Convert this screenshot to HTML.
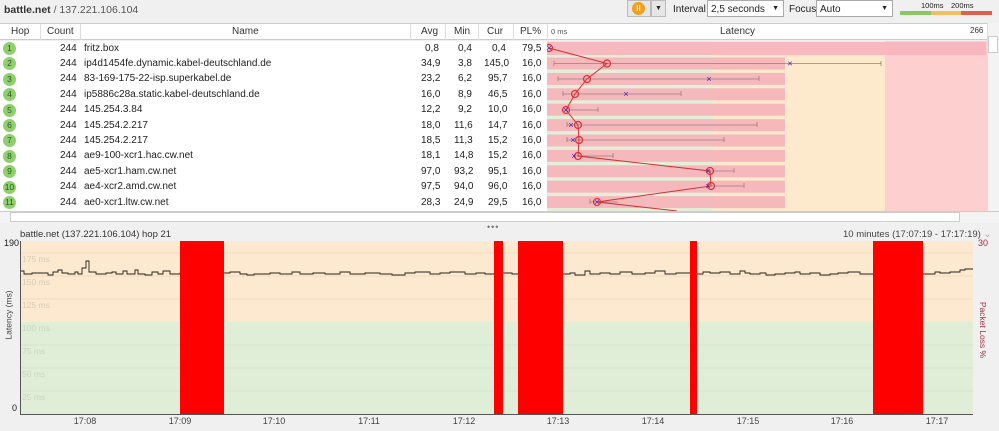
<!DOCTYPE html>
<html><head><meta charset="utf-8"><style>
*{margin:0;padding:0;box-sizing:border-box}
body{width:999px;height:431px;background:#f0f0f0;font-family:"Liberation Sans",sans-serif;font-size:10px;color:#222;position:relative;overflow:hidden}
.a{position:absolute;white-space:nowrap}
.hdr{position:absolute;top:23px;height:17px;left:0;width:987px;background:#fff;border-bottom:1px solid #ccc;border-top:1px solid #ccc}
.hdr div{position:absolute;top:2px;color:#333}
.tbl{position:absolute;top:41px;left:0;width:547px;height:170px;background:#fff}
.r{position:absolute;left:0;width:547px;height:15px}
.r span{position:absolute;top:1.5px}
.hop{position:absolute;left:3px;top:1px;width:13px;height:13px;border-radius:50%;background:#8fcf6e;color:#2a5d1a;font-size:8.5px;text-align:center;line-height:13px}
</style></head><body>
<div class="a" style="left:4px;top:4px;font-size:10.5px;color:#555"><b style="color:#333">battle.net</b> / 137.221.106.104</div>
<div class="a" style="left:627px;top:0;width:24px;height:17px;border:1px solid #bbb;background:#e6e6e6"></div>
<div class="a" style="left:632px;top:2px;width:13px;height:13px;border-radius:50%;background:#f0a020;color:#fff;font-size:8px;line-height:13px;text-align:center;font-weight:bold">ll</div>
<div class="a" style="left:651px;top:0;width:15px;height:17px;border:1px solid #bbb;background:#e6e6e6;font-size:7px;text-align:center;line-height:15px">▼</div>
<div class="a" style="left:673px;top:4px;font-size:10px">Interval</div>
<div class="a" style="left:707px;top:0;width:77px;height:17px;border:1px solid #aaa;background:#fff;font-size:10px;padding:3px 3px">2,5 seconds<span style="position:absolute;right:4px;font-size:7px;top:4px">▼</span></div>
<div class="a" style="left:789px;top:4px;font-size:10px">Focus</div>
<div class="a" style="left:816px;top:0;width:77px;height:17px;border:1px solid #aaa;background:#fff;font-size:10px;padding:3px 3px">Auto<span style="position:absolute;right:4px;font-size:7px;top:4px">▼</span></div>
<div class="a" style="left:921px;top:1px;font-size:7.5px">100ms</div><div class="a" style="left:951px;top:1px;font-size:7.5px">200ms</div>
<div class="a" style="left:900px;top:11px;width:31px;height:4px;background:#8cc665"></div>
<div class="a" style="left:931px;top:11px;width:30px;height:4px;background:#f0c060"></div>
<div class="a" style="left:961px;top:11px;width:31px;height:4px;background:#e06050"></div>
<div class="hdr">
<div style="left:11px">Hop</div><div style="left:47px">Count</div><div style="left:232px">Name</div>
<div style="left:421px">Avg</div><div style="left:454px">Min</div><div style="left:487px">Cur</div><div style="left:520px">PL%</div>
<div style="left:720px">Latency</div><div style="left:970px;font-size:8px">266</div>
</div>
<div class="a" style="left:40px;top:24px;width:1px;height:16px;background:#ddd"></div>
<div class="a" style="left:80px;top:24px;width:1px;height:16px;background:#ddd"></div>
<div class="a" style="left:410px;top:24px;width:1px;height:16px;background:#ddd"></div>
<div class="a" style="left:445px;top:24px;width:1px;height:16px;background:#ddd"></div>
<div class="a" style="left:478px;top:24px;width:1px;height:16px;background:#ddd"></div>
<div class="a" style="left:513px;top:24px;width:1px;height:16px;background:#ddd"></div>
<div class="a" style="left:547px;top:24px;width:1px;height:16px;background:#ddd"></div>
<div class="a" style="left:551px;top:27px;font-size:7.5px;color:#555">0 ms</div>
<div class="tbl">
<div class="r" style="top:0"><div class="hop">1</div><span style="left:60px">244</span><span style="left:84px">fritz.box</span><span style="left:425px">0,8</span><span style="left:458px">0,4</span><span style="left:492px">0,4</span><span style="left:522px">79,5</span></div>
<div class="r" style="top:15.4px"><div class="hop">2</div><span style="left:60px">244</span><span style="left:84px">ip4d1454fe.dynamic.kabel-deutschland.de</span><span style="left:421px">34,9</span><span style="left:458px">3,8</span><span style="left:484px">145,0</span><span style="left:522px">16,0</span></div>
<div class="r" style="top:30.8px"><div class="hop">3</div><span style="left:60px">244</span><span style="left:84px">83-169-175-22-isp.superkabel.de</span><span style="left:421px">23,2</span><span style="left:458px">6,2</span><span style="left:488px">95,7</span><span style="left:522px">16,0</span></div>
<div class="r" style="top:46.2px"><div class="hop">4</div><span style="left:60px">244</span><span style="left:84px">ip5886c28a.static.kabel-deutschland.de</span><span style="left:421px">16,0</span><span style="left:458px">8,9</span><span style="left:488px">46,5</span><span style="left:522px">16,0</span></div>
<div class="r" style="top:61.6px"><div class="hop">5</div><span style="left:60px">244</span><span style="left:84px">145.254.3.84</span><span style="left:421px">12,2</span><span style="left:458px">9,2</span><span style="left:488px">10,0</span><span style="left:522px">16,0</span></div>
<div class="r" style="top:77px"><div class="hop">6</div><span style="left:60px">244</span><span style="left:84px">145.254.2.217</span><span style="left:421px">18,0</span><span style="left:454px">11,6</span><span style="left:488px">14,7</span><span style="left:522px">16,0</span></div>
<div class="r" style="top:92.4px"><div class="hop">7</div><span style="left:60px">244</span><span style="left:84px">145.254.2.217</span><span style="left:421px">18,5</span><span style="left:454px">11,3</span><span style="left:488px">15,2</span><span style="left:522px">16,0</span></div>
<div class="r" style="top:107.8px"><div class="hop">8</div><span style="left:60px">244</span><span style="left:84px">ae9-100-xcr1.hac.cw.net</span><span style="left:421px">18,1</span><span style="left:454px">14,8</span><span style="left:488px">15,2</span><span style="left:522px">16,0</span></div>
<div class="r" style="top:123.2px"><div class="hop">9</div><span style="left:60px">244</span><span style="left:84px">ae5-xcr1.ham.cw.net</span><span style="left:421px">97,0</span><span style="left:454px">93,2</span><span style="left:488px">95,1</span><span style="left:522px">16,0</span></div>
<div class="r" style="top:138.6px"><div class="hop">10</div><span style="left:60px">244</span><span style="left:84px">ae4-xcr2.amd.cw.net</span><span style="left:421px">97,5</span><span style="left:454px">94,0</span><span style="left:488px">96,0</span><span style="left:522px">16,0</span></div>
<div class="r" style="top:154px"><div class="hop">11</div><span style="left:60px">244</span><span style="left:84px">ae0-xcr1.ltw.cw.net</span><span style="left:421px">28,3</span><span style="left:454px">24,9</span><span style="left:488px">29,5</span><span style="left:522px">16,0</span></div>
</div>
<svg class="a" style="left:547px;top:41px" width="440" height="170">
<rect x="0" y="0" width="166" height="170" fill="#e3efd8"/>
<rect x="166" y="0" width="172" height="170" fill="#fde9cc"/>
<rect x="338" y="0" width="102" height="170" fill="#fdd0cf"/>
<rect x="0" y="1" width="439" height="13" fill="#f7b3bb" opacity=".9"/>
<g fill="#f7b3bb" opacity=".9">
<rect x="0" y="16.5" width="238" height="12"/><rect x="0" y="31.9" width="238" height="12"/><rect x="0" y="47.3" width="238" height="12"/><rect x="0" y="62.7" width="238" height="12"/><rect x="0" y="78.1" width="238" height="12"/><rect x="0" y="93.5" width="238" height="12"/><rect x="0" y="108.9" width="238" height="12"/><rect x="0" y="124.3" width="238" height="12"/><rect x="0" y="139.7" width="238" height="12"/><rect x="0" y="155.1" width="238" height="12"/>
</g>
<g stroke="#9a7d80" stroke-width="0.8">
<path d="M7 22.5H334M7 20v5M334 20v5"/><path d="M11 38H212M11 35v5M212 35v5"/><path d="M16 53H134M16 50v5M134 50v5"/>
<path d="M16 69H51M51 66v5"/><path d="M20 84H210M20 81v5M210 81v5"/><path d="M20 99H177M20 96v5M177 96v5"/>
<path d="M26 115H66M66 112v5"/><path d="M163 130H187M187 127v5"/><path d="M163 145H197M197 142v5"/><path d="M43 161H71M43 158v5"/>
</g>
<polyline fill="none" stroke="#d03030" stroke-width="1" points="2,7 60,22.5 40,38 28,53 19,69 31,84 32,99 31,115 163,130 164,145 50,161 130,170"/>
<g fill="none" stroke="#e03030" stroke-width="1.2">
<circle cx="2" cy="7" r="3.5"/><circle cx="60" cy="22.5" r="3.5"/><circle cx="40" cy="38" r="3.5"/><circle cx="28" cy="53" r="3.5"/><circle cx="19" cy="69" r="3.5"/><circle cx="31" cy="84" r="3.5"/><circle cx="32" cy="99" r="3.5"/><circle cx="31" cy="115" r="3.5"/><circle cx="163" cy="130" r="3.5"/><circle cx="164" cy="145" r="3.5"/><circle cx="50" cy="161" r="3.5"/>
</g>
<g fill="#4020c0" font-size="9" font-family="Liberation Sans" text-anchor="middle">
<text x="2" y="10">×</text><text x="243" y="25.5">×</text><text x="162" y="41">×</text><text x="79" y="56">×</text><text x="19" y="72">×</text><text x="24" y="87">×</text><text x="26" y="102">×</text><text x="27" y="118">×</text><text x="161" y="133">×</text><text x="161" y="148">×</text><text x="50" y="164">×</text>
</g>
</svg>
<div class="a" style="left:987px;top:23px;width:12px;height:188px;background:#f3f3f3;border-left:1px solid #ddd"></div>
<div class="a" style="left:988px;top:36px;width:10px;height:17px;background:#fff;border:1px solid #ccc"></div>
<div class="a" style="left:0;top:211px;width:999px;height:12px;background:#f3f3f3;border-top:1px solid #ccc"></div>
<div class="a" style="left:10px;top:212px;width:950px;height:10px;background:#fff;border:1px solid #ccc"></div>
<div class="a" style="left:487px;top:222px;font-size:9px;color:#777;letter-spacing:1px">•••</div>
<div class="a" style="left:20px;top:229px;font-size:9.5px;color:#333">battle.net (137.221.106.104) hop 21</div>
<div class="a" style="left:843px;top:229px;font-size:9.5px;color:#444">10 minutes (17:07:19 - 17:17:19) <span style="color:#aaa">⌄</span></div>
<div class="a" style="left:4px;top:238px;font-size:9px">190</div>
<div class="a" style="left:12px;top:403px;font-size:9px">0</div>
<div class="a" style="left:-16px;top:310px;font-size:8.5px;transform:rotate(-90deg);color:#444">Latency (ms)</div>
<div class="a" style="left:978px;top:238px;font-size:9px;color:#a03040">30</div>
<div class="a" style="left:955px;top:325px;font-size:8.5px;transform:rotate(90deg);color:#a03040">Packet Loss %</div>
<svg class="a" style="left:20px;top:241px" width="954" height="190" font-family="Liberation Sans">
<rect x="0" y="0" width="953" height="81" fill="#fde9cf"/>
<rect x="0" y="81" width="953" height="92" fill="#e0eed8"/>
<g stroke="#e8d9c0" stroke-width="0.7"><path d="M0 12H953M0 35H953M0 58H953"/></g>
<g stroke="#d2dfc8" stroke-width="0.7"><path d="M0 104H953M0 127H953M0 150H953"/></g>
<g fill="#d8cbb8" font-size="8.5"><text x="2" y="21">175 ms</text><text x="2" y="44">150 ms</text><text x="2" y="67">125 ms</text></g>
<g fill="#c8d5c0" font-size="8.5"><text x="2" y="90">100 ms</text><text x="2" y="113">75 ms</text><text x="2" y="136">50 ms</text><text x="2" y="159">25 ms</text></g>
<path fill="none" stroke="#222" stroke-width="0.9" d="M0 30H4V33H12V32H28V34H33V31H38V29H42V32H48V33H55V31H58V33H62V27H66V20H69V31H76V33H86V32H92V31H96V33H103V30H107V33H115V29H118V33H125V34H132V31H138V33H143V30H150V33H160V32H168V33H175V34H180M203 33V32H210V31H220V33H227V34H234V33H250V32H260V33H272V31H280V33H293V32H305V33H320V31H330V33H345V32H360V33H372V34H385V32H395V31H410V33H420V32H430V31H445V33H456V32H465V33H474M483 32H492V33H498M543 33H550V32H555V34H565V30H570V33H580V32H590V33H600V31H612V33H625V32H635V30H645V33H656V32H670M677 33H683V31H690V32H700V31H710V33H720V30H725V32H730V33H740V32H746V34H755V33H765V32H775V31H780V33H790V32H800V34H810V33H818V32H828V31H840V33H853M903 33H915V31H920V32H930V31H940V29H945V28H953"/>
<g fill="#f00"><rect x="160" y="0" width="44" height="173"/><rect x="474" y="0" width="9" height="173"/><rect x="498" y="0" width="45" height="173"/><rect x="670" y="0" width="7" height="173"/><rect x="853" y="0" width="50" height="173"/></g>
<path d="M0.5 0V173.5H953" fill="none" stroke="#555" stroke-width="1"/>
<g fill="#444" font-size="9" text-anchor="middle">
<text x="65" y="183">17:08</text><text x="160" y="183">17:09</text><text x="254" y="183">17:10</text><text x="349" y="183">17:11</text><text x="444" y="183">17:12</text><text x="538" y="183">17:13</text><text x="633" y="183">17:14</text><text x="728" y="183">17:15</text><text x="822" y="183">17:16</text><text x="917" y="183">17:17</text>
</g>
</svg>
</body></html>
